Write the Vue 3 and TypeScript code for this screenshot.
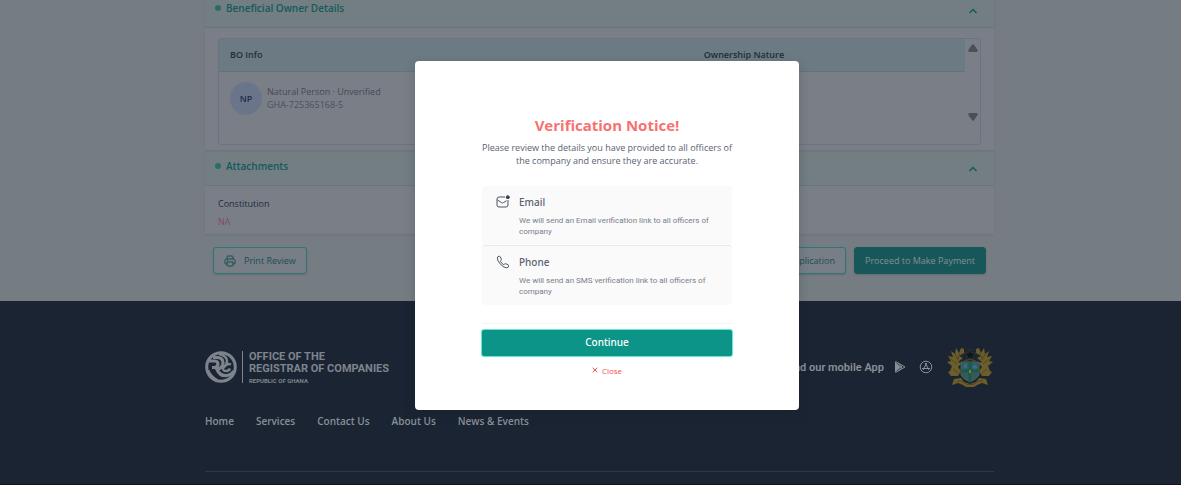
<script setup lang="ts">
interface Channel {
  id: string
  title: string
  text: string
}

const channels: Channel[] = [
  { id: 'email', title: 'Email', text: 'We will send an Email verification link to all officers of company' },
  { id: 'phone', title: 'Phone', text: 'We will send an SMS verification link to all officers of company' },
]

const links: string[] = ['Home', 'Services', 'Contact Us', 'About Us', 'News & Events']
</script>

<template>
  <div class="page">
    <main class="content">
      <section class="card">
        <header class="card-head">
          <h2><span class="dot"></span>Beneficial Owner Details</h2>
          <button class="toggle" type="button" aria-label="Collapse Beneficial Owner Details">
            <svg viewBox="0 0 10 6" width="10" height="6"><path d="M1.5 5 5 1.5 8.5 5" /></svg>
          </button>
        </header>
        <div class="card-body owners">
          <div class="table-box">
            <table>
              <thead>
                <tr><th>BO Info</th><th>Ownership Nature</th></tr>
              </thead>
              <tbody>
                <tr>
                  <td>
                    <div class="person">
                      <span class="avatar">NP</span>
                      <div>
                        <div class="person-name">Natural Person · Unverified</div>
                        <div class="person-id">GHA-725365168-5</div>
                      </div>
                    </div>
                  </td>
                  <td></td>
                </tr>
              </tbody>
            </table>
            <div class="scrollbar" aria-hidden="true">
              <svg viewBox="0 0 10 8" width="10" height="8"><path d="M4 .8Q5-.4 6 .8L9.6 6Q10 8 8.500 8H1.500Q0 8 .4 6Z" /></svg>
              <svg viewBox="0 0 10 8" width="10" height="8"><path d="M4 7.200Q5 8.400 6 7.200L9.600 2Q10 0 8.500 0H1.500Q0 0 .4 2Z" /></svg>
            </div>
          </div>
        </div>
      </section>

      <section class="card">
        <header class="card-head">
          <h2><span class="dot"></span>Attachments</h2>
          <button class="toggle" type="button" aria-label="Collapse Attachments">
            <svg viewBox="0 0 10 6" width="10" height="6"><path d="M1.5 5 5 1.5 8.5 5" /></svg>
          </button>
        </header>
        <div class="card-body attachments">
          <div class="label">Constitution</div>
          <div class="missing">NA</div>
        </div>
      </section>

      <div class="actions">
        <button class="btn outline" type="button">
          <svg class="printer" viewBox="0 0 12 12" width="12" height="12">
            <path d="M3 4V1.800Q3 1 3.800 1H8.200Q9 1 9 1.800V4M3 9H1.800Q1 9 1 8.200V5.500Q1 4 2.500 4H9.500Q11 4 11 5.500V8.200Q11 9 10.200 9H9M3 7H9V10.200Q9 11 8.200 11H3.800Q3 11 3 10.200ZM3 5.500H4.200" />
          </svg>
          Print Review
        </button>
        <button class="btn outline push" type="button">Save Application</button>
        <button class="btn solid" type="button">Proceed to Make Payment</button>
      </div>
    </main>

    <footer class="footer">
      <div class="footer-inner">
        <div class="brand-row">
          <div class="brand">
            <svg class="mark" viewBox="0 0 32 32" width="32" height="32">
              <circle cx="16" cy="16" r="14.300" stroke-width="3" />
              <path stroke-width="3.200" d="M2 10H9Q13 10 13 13Q13 16 9.500 16.500H7M8 6.500H13Q18 7 18 12Q18 17 12 18.500Q15 25.500 22 24.500Q27 23.500 29 20" />
              <path stroke-width="2.400" d="M14 3Q22 5 22 10Q22 14 18.500 16.500Q17 20 21 20Q24 20 25 17.500M20 15Q22.500 12 26 13.500M3 19Q6 26 12 29" />
            </svg>
            <div class="brand-text">
              <div class="brand-name">OFFICE OF THE<br />REGISTRAR OF COMPANIES</div>
              <div class="brand-sub">REPUBLIC OF GHANA</div>
            </div>
          </div>
          <div class="apps">
            <span class="apps-text">Download our mobile App</span>
            <a href="#" aria-label="Google Play">
              <svg viewBox="0 0 12 14" width="12" height="14">
                <path class="fill" d="M1 1.500 6.500 7 1 12.500Z" />
                <path class="line" d="M1.500 1.500 11 7 1.500 12.500M4 2.800 8.500 9M4 11.200 8.500 5" />
              </svg>
            </a>
            <a href="#" aria-label="App Store">
              <svg viewBox="0 0 14 14" width="14" height="14">
                <circle class="line" cx="7" cy="7" r="5.800" />
                <path class="line" d="M6.200 3 10 10M7.800 3 4 10M3 8.500H11" />
              </svg>
            </a>
            <svg class="crest" viewBox="0 0 48 42" width="48" height="42">
              <g class="gold">
                <path d="M18 3 15 2 13 7 10 2 9 8 5 5 7 11 2 10 5 15 1 16 6 20 4 25 2 26 5 30 12 30 15 25 12 21 16 17 12 16 17 12 13 10 18 7Z" />
                <path d="M30 3 33 2 35 7 38 2 39 8 43 5 41 11 46 10 43 15 47 16 42 20 44 25 46 26 43 30 36 30 33 25 36 21 32 17 36 16 31 12 35 10 30 7Z" />
                <path d="M8 33 15 32 18 36 24 38 30 36 33 32 40 33 42 39 36 37 31 39 28 41H20L17 39 12 37 6 39Z" />
              </g>
              <path class="feather" d="M9 8 12 14M5 13 11 18M14 7 12 13M7 23 12 27M39 8 36 14M43 13 37 18M34 7 36 13M41 23 36 27M11 35H16L21 38.500H27L32 35H37" />
              <path class="star" d="M24 3 25.500 7H30L26.500 10 28 14 24 11.500 20 14 21.500 10 18 7H22.500Z" />
              <path class="wreath" d="M18 15Q24 12 30 15" />
              <path class="shield" d="M15 16H33V29Q31 33 24 36Q17 33 15 29Z" />
              <path class="cross" d="M24 16V36M15 25H33" />
              <path class="charge" d="M18 18 21 22M21 18 18 22M27.500 22V20H30V22Z" />
              <path class="brown" d="M18 28H21V31H18ZM27 28H30V31H27Z" />
              <path class="lion" d="M23 24H25V27H23Z" />
            </svg>
          </div>
        </div>
        <nav class="links">
          <a v-for="link in links" :key="link" href="#">{{ link }}</a>
        </nav>
        <hr />
      </div>
    </footer>

    <div class="overlay">
      <div class="dialog" role="dialog" aria-modal="true" aria-labelledby="notice-title">
        <h1 id="notice-title">Verification Notice!</h1>
        <p class="lead">Please review the details you have provided to all officers of the company and ensure they are accurate.</p>
        <ul class="channels">
          <li v-for="channel in channels" :key="channel.id">
            <svg v-if="channel.id === 'email'" viewBox="0 0 14 14" width="14" height="14">
              <path d="M9 2H3Q1 2 1 4V10Q1 12 3 12H10Q12 12 12 10V5M1.500 5 5.500 7.600Q6.500 8.200 7.500 7.600L10.500 5.700" />
              <circle cx="11.800" cy="2.200" r="1.900" />
            </svg>
            <svg v-else viewBox="0 0 14 14" width="14" height="14">
              <path d="M1.300 3Q1.500 1.300 3.300 1.200Q4 1.200 4.400 2L5.300 4Q5.500 4.700 5 5.300L4.300 6.200Q5.500 8.500 7.800 9.700L8.700 9Q9.300 8.500 10 8.800L12 9.700Q12.800 10.100 12.700 11Q12.400 12.700 10.700 12.800Q8 12.800 4.700 9.500Q1.200 6 1.300 3Z" />
            </svg>
            <div>
              <h3>{{ channel.title }}</h3>
              <p>{{ channel.text }}</p>
            </div>
          </li>
        </ul>
        <div class="dialog-actions">
          <button class="continue" type="button">Continue</button>
          <button class="close" type="button">
            <svg viewBox="0 0 6 6" width="6" height="6"><path d="M.7.7 5.300 5.300M5.300.7.7 5.300" /></svg>
            Close
          </button>
        </div>
      </div>
    </div>
  </div>
</template>

<style>
body {
  margin: 0;
  background: #757d83;
}
</style>

<style scoped>
* {
  box-sizing: border-box;
}
.page {
  position: relative;
  min-height: 100vh;
  overflow: hidden;
  display: flex;
  flex-direction: column;
  font-family: "Open Sans", "Noto Sans", sans-serif;
  font-size: 9px;
  line-height: 13px;
  color: #1f2c3d;
}
h1, h2, h3, p, ul {
  margin: 0;
  padding: 0;
}
button {
  font: inherit;
  cursor: pointer;
}
svg {
  display: block;
  flex: none;
}
.content,
.footer-inner {
  width: 100%;
  max-width: 807px;
  margin: 0 auto;
  padding-left: 18px;
}
.content {
  margin-top: -6px;
  padding-bottom: 27px;
}
.card {
  background: #7a7f87;
  border-bottom: 1px solid #6f757d;
  box-shadow: 0 0 2px #6c737b;
  margin-bottom: 1px;
}
.card-head {
  display: flex;
  justify-content: space-between;
  height: 34px;
  padding: 6px 16px 0 10px;
  background: #727e82;
  border-bottom: 1px solid #69747b;
}
.card-head h2 {
  display: flex;
  align-items: center;
  gap: 5px;
  height: 16px;
  font-size: 10px;
  line-height: 16px;
  font-weight: 600;
  color: #145a5c;
}
.dot {
  width: 6px;
  height: 6px;
  border-radius: 50%;
  background: #2c6b69;
}
.toggle {
  height: 22px;
  padding: 0;
  border: 0;
  background: none;
}
.toggle path {
  fill: none;
  stroke: #135d5d;
  stroke-width: 1.5;
}
.owners {
  padding: 10px 13px 5px;
}
.table-box {
  display: flex;
  height: 107px;
  border: 1px solid #6c737e;
  border-radius: 3px;
  overflow: hidden;
}
table {
  flex: 1;
  align-self: flex-start;
  table-layout: fixed;
  border-collapse: collapse;
}
th {
  width: 36.5%;
  height: 32px;
  padding: 0 11px;
  text-align: left;
  font-weight: 600;
  color: #1c3039;
  background: #6c7b83;
  border-bottom: 1px solid #69707b;
}
th:first-child {
  width: 63.5%;
}
td {
  padding: 10px 11px;
}
.person {
  display: flex;
  align-items: center;
  gap: 5px;
  color: #434954;
}
.avatar {
  display: grid;
  place-items: center;
  width: 32px;
  height: 33px;
  border-radius: 50%;
  background: #6b758a;
  color: #252c4c;
  font-weight: 600;
}
.person-name {
  font-weight: 500;
}
.person-id {
  color: #4b505b;
}
.scrollbar {
  width: 15px;
  display: flex;
  flex-direction: column;
  align-items: center;
  justify-content: space-between;
  padding: 5px 0 23px;
  fill: #4b5058;
}
.attachments {
  padding: 11px 13px 6px;
}
.label {
  font-weight: 500;
  margin-bottom: 5px;
}
.missing {
  color: #804d57;
}
.actions {
  display: flex;
  gap: 8px;
  padding: 11px 8px 0;
}
.btn {
  display: flex;
  align-items: center;
  gap: 8px;
  height: 27px;
  padding: 0 10px;
  border-radius: 3px;
  border: 1px solid #2f7774;
  color: #1d4d53;
  font-weight: 500;
  box-shadow: 0 1px 2px #646c72;
}
.outline {
  background: #777e86;
}
.printer {
  fill: none;
  stroke: currentColor;
}
.push {
  margin-left: auto;
}
.solid {
  background: #17575a;
  border-color: #17575a;
  color: #858e94;
}
.footer {
  flex: 1;
  background: #1b2433;
  border-bottom: 1px solid #11141e;
  color: #8a8f96;
}
.brand-row {
  display: flex;
  justify-content: space-between;
  align-items: center;
  height: 42px;
  margin-top: 45px;
}
.brand {
  display: flex;
  align-items: center;
  gap: 5px;
  color: #7e848c;
}
.mark {
  fill: none;
  stroke: currentColor;
}
.brand-text {
  border-left: 1px solid currentColor;
  height: 32px;
  padding-left: 6px;
  font-family: Roboto, "Liberation Sans", sans-serif;
  font-weight: 700;
}
.brand-name {
  font-size: 11px;
  line-height: 12px;
}
.brand-sub {
  font-size: 6px;
  line-height: 11px;
}
.apps {
  display: flex;
  align-items: center;
  gap: 10px;
}
.apps a {
  color: inherit;
  margin-right: 3px;
}
.apps-text {
  font-size: 11px;
  line-height: 15px;
  font-weight: 600;
  font-family: Roboto, "Open Sans", sans-serif;
}
.fill {
  fill: currentColor;
}
.line {
  fill: none;
  stroke: currentColor;
  stroke-width: 1;
}
.gold { fill: #6c5e2a; }
.feather { fill: none; stroke: #4d4728; }
.star { fill: #0e151c; stroke: #49462b; stroke-width: .5; }
.wreath { fill: none; stroke: #4c4a2b; stroke-width: 1; }
.shield { fill: #285d78; stroke: #57612f; }
.cross { fill: none; stroke: #1f5a3c; stroke-width: 3; }
.charge { fill: none; stroke: #56707c; }
.brown { fill: #544f3b; }
.lion { fill: #8a7730; }
.links {
  display: flex;
  gap: 22px;
  margin-top: 26px;
}
.links a {
  color: inherit;
  font-size: 10px;
  line-height: 15px;
  font-weight: 600;
  text-decoration: none;
}
hr {
  height: 1px;
  margin: 42px 0 0;
  border: 0;
  background: #303940;
}
.overlay {
  position: absolute;
  inset: 0;
  display: grid;
  place-items: center;
  padding: 0 0 15px 33px;
}
.dialog {
  width: 384px;
  padding: 53px 67px 34px;
  border-radius: 4px;
  background: #fff;
  box-shadow: 0 4px 12px rgba(17, 30, 38, .2);
  text-align: center;
  color: #596273;
}
.dialog h1 {
  font-size: 15px;
  line-height: 22px;
  font-weight: 700;
  color: #f87171;
}
.lead {
  margin-top: 5px;
}
.channels {
  list-style: none;
  margin-top: 19px;
  text-align: left;
}
.channels li {
  display: flex;
  gap: 9px;
  padding: 9px 14px 8px;
  border-radius: 3px;
  background: #fafafa;
}
.channels li + li {
  border-top: 1px solid #e9eaec;
}
.channels svg {
  fill: none;
  stroke: #4b5563;
}
.channels circle {
  fill: #374151;
  stroke: none;
}
.channels h3 {
  font-family: "Noto Sans", sans-serif;
  font-size: 10px;
  line-height: 14px;
  font-weight: 500;
}
.channels p {
  margin-top: 6px;
  font-family: Roboto, "Open Sans", sans-serif;
  font-size: 8px;
  line-height: 11px;
  color: #77808d;
}
.dialog-actions {
  margin-top: 18px;
  padding-top: 6px;
  border-top: 1px solid #f3f4f6;
}
.continue {
  width: 100%;
  height: 26px;
  border: 1px solid #0d9488;
  border-radius: 2px;
  background: #0d9488;
  color: #fff;
  font-family: "Noto Sans", sans-serif;
  font-size: 10px;
  font-weight: 500;
  box-shadow: 0 0 0 1px #5eead4;
}
.close {
  display: flex;
  align-items: center;
  gap: 4px;
  margin: 9px auto 0;
  padding: 0;
  border: 0;
  background: none;
  font-size: 8px;
  line-height: 11px;
  color: #f05252;
}
.close path {
  stroke: currentColor;
}
</style>
